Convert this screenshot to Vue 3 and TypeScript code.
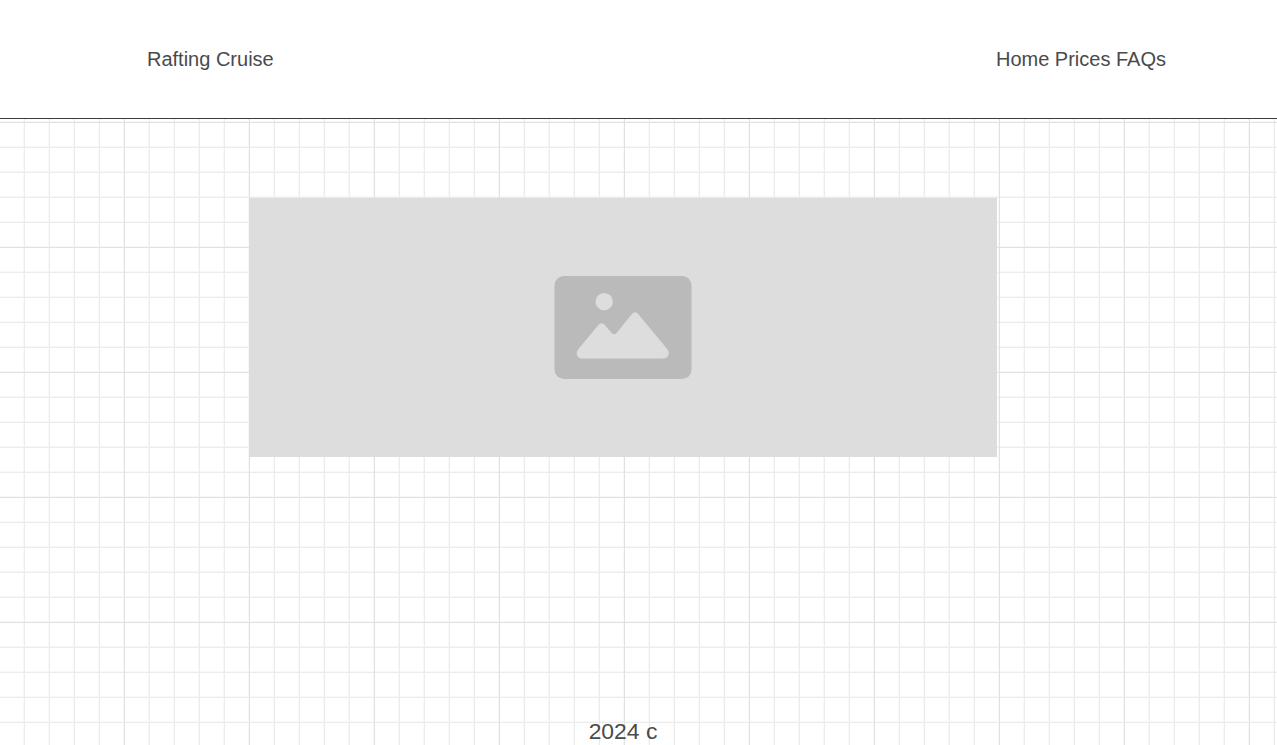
<script setup lang="ts">
const brand: string = 'Rafting Cruise'
const links: string[] = ['Home', 'Prices', 'FAQs']
</script>

<template>
  <div class="page">
    <header class="header">
      <div class="brand">{{ brand }}</div>
      <nav class="nav">{{ links.join(' ') }}</nav>
    </header>
    <main class="canvas">
      <div class="hero">
        <svg class="picture" viewBox="0 0 138 103" role="img" aria-label="Image placeholder">
          <rect x="0.5" y="0" width="137" height="103" rx="9.5" fill="#bababa" />
          <circle cx="50.2" cy="25.7" r="8.7" fill="#ddd" />
          <path
            d="M24.2 73.3 L44.2 49.2 Q47.5 45.2 51 49.2 L57 56.3 Q60 60 63.3 56.3 L77.4 38.5 Q81 34 84.6 38.5 L113.2 73.1 C116.4 77.1 114.6 82.6 109.3 82.6 H28.3 C23 82.6 21.2 77.1 24.2 73.3 Z"
            fill="#ddd"
          />
        </svg>
      </div>
      <footer class="footer">2024 c</footer>
    </main>
  </div>
</template>

<style>
body {
  margin: 0;
  overflow: hidden;
}
</style>

<style scoped>
.page {
  height: 745px;
  display: flex;
  flex-direction: column;
  overflow: hidden;
  background: #fff;
  color: #4a4a4a;
  font-family: 'Liberation Sans', Arial, sans-serif;
}
.header {
  box-sizing: border-box;
  height: 119px;
  flex: none;
  display: flex;
  align-items: center;
  justify-content: space-between;
  padding: 0 111px 0 147px;
  border-bottom: 1px solid #3c3c3c;
  font-size: 20px;
  line-height: 24px;
}
.canvas {
  box-sizing: border-box;
  flex: 1;
  min-height: 0;
  display: flex;
  flex-direction: column;
  justify-content: space-between;
  padding: 79px 280px 0 249px;
  --soft: #f8f8f8;
  --minor: #ececec;
  --major: #e1e1e1;
  /* Solid lines are stacked above their one-pixel soft edges. */
  background-image:
    linear-gradient(90deg, transparent 1px, var(--major) 1px, var(--major) 2px, transparent 2px),
    linear-gradient(transparent 1px, var(--major) 1px, var(--major) 2px, transparent 2px),
    linear-gradient(90deg, transparent 1px, var(--minor) 1px, var(--minor) 2px, transparent 2px),
    linear-gradient(transparent 1px, var(--minor) 1px, var(--minor) 2px, transparent 2px),
    linear-gradient(90deg, var(--soft) 1px, transparent 1px),
    linear-gradient(var(--soft) 1px, transparent 1px);
  background-size: 125px 125px, 125px 125px, 25px 25px, 25px 25px, 25px 25px, 25px 25px;
  background-position: -2px 0, 0 2px, -2px 0, 0 2px, -2px 0, 0 2px;
}
.hero {
  height: 259px;
  flex: none;
  display: flex;
  align-items: center;
  justify-content: center;
  background: #ddd;
}
.picture {
  width: 138px;
  height: 103px;
}
.footer {
  height: 28px;
  flex: none;
  line-height: 28px;
  font-size: 22.9px;
  text-align: center;
}
</style>
